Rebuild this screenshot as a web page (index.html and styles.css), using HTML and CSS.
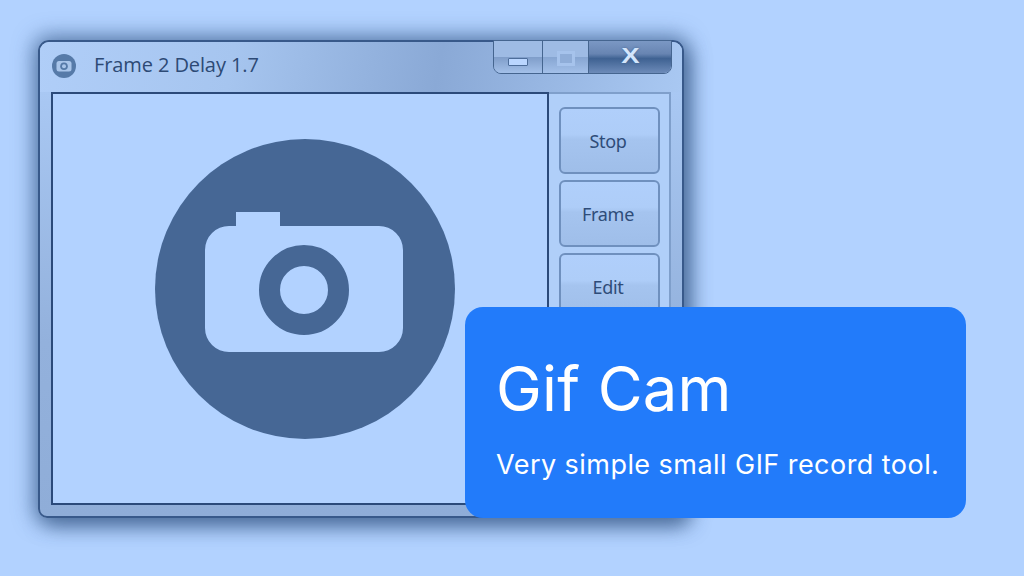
FILE: index.html
```html
<!DOCTYPE html>
<html lang="en">
<head>
<meta charset="utf-8">
<title>Gif Cam</title>
<link rel="stylesheet" href="styles.css">
</head>
<body>
<main class="stage">
  <section class="window">
    <header class="titlebar">
      <svg class="app-icon" viewBox="0 0 24 24" aria-hidden="true">
        <circle cx="12" cy="12" r="12" fill="#567aa8"/>
        <rect x="4.500" y="7" width="15" height="10.500" rx="2.500" fill="#a9c5ea"/>
        <circle cx="12" cy="12.200" r="3.800" fill="#567aa8"/>
        <circle cx="12" cy="12.200" r="2" fill="#a9c5ea"/>
      </svg>
      <span class="title">Frame 2 Delay 1.7</span>
      <div class="controls">
        <div class="ctl ctl-min"><span class="min-glyph"></span></div>
        <div class="ctl ctl-max"><span class="max-glyph"></span></div>
        <div class="ctl ctl-close"><span class="close-glyph">X</span></div>
      </div>
    </header>
    <div class="client">
      <div class="pane">
        <svg class="logo" viewBox="0 0 300 300" aria-hidden="true">
          <circle cx="150" cy="150" r="150" fill="#466795"/>
          <path fill="#b2d2ff" d="M81 87V73h44v14h99a24 24 0 0 1 24 24v78a24 24 0 0 1-24 24H74a24 24 0 0 1-24-24v-78a24 24 0 0 1 24-24z"/>
          <circle cx="149" cy="151" r="34.500" fill="none" stroke="#466795" stroke-width="21"/>
        </svg>
      </div>
      <aside class="side">
        <div class="btn">Stop</div>
        <div class="btn">Frame</div>
        <div class="btn">Edit</div>
      </aside>
    </div>
  </section>
  <section class="card">
    <h1>Gif Cam</h1>
    <p>Very simple small GIF record tool.</p>
  </section>
</main>
</body>
</html>
```
FILE: styles.css
```css
* { box-sizing: border-box; }
html, body { margin: 0; padding: 0; }
body { width: 1024px; height: 576px; overflow: hidden; background: #b2d2ff; }
.stage { position: relative; width: 1024px; height: 576px; overflow: hidden; }

.window {
  position: absolute; left: 38px; top: 40px; width: 646px; height: 478px;
  display: flex; flex-direction: column;
  border: 2px solid #38598a; border-radius: 11px 11px 9px 9px;
  background: linear-gradient(#a9c8f3 0, #a9c8f3 50px, #93b1dc 300px, #8fadd8 100%);
  box-shadow: 0 0 20px 5px rgba(52, 86, 134, .6), 6px 8px 20px rgba(40, 72, 120, .55);
}
.titlebar {
  height: 50px; flex: none; display: flex; align-items: center; padding: 0 0 0 12px; position: relative;
  border-radius: 9px 9px 0 0;
  background: linear-gradient(100deg, #b0cef8 0%, #a6c5ef 30%, #8aa9d6 62%, #97b6e2 78%, #a9c8f2 100%);
}
.app-icon { width: 24px; height: 24px; flex: none; margin-top: -2px; }
.title { margin-left: 18px; margin-top: -4px; font: 20px/24px "Open Sans", "Noto Sans", sans-serif; letter-spacing: -.1px; color: #2d4a75; }
.controls {
  position: absolute; top: -2px; right: 10px; height: 34px; width: 179px;
  display: flex; border: 1px solid #45658f; border-radius: 0 0 8px 8px; overflow: hidden;
}
.ctl { display: flex; align-items: center; justify-content: center; height: 100%; }
.ctl-min { width: 49px; border-right: 1px solid #45658f; background: linear-gradient(#9ebbe4 0 50%, #7f9dc9 50%, #a3c0e9 100%); }
.ctl-max { width: 46px; border-right: 1px solid #45658f; background: linear-gradient(#9ebbe4 0 50%, #86a5d1 50%, #a3c0e9 100%); }
.ctl-close { flex: 1; background: linear-gradient(#7b98c4 0, #6885b2 40%, #3f6292 55%, #6d8bb9 100%); }
.min-glyph { width: 20px; height: 8px; margin-top: 9px; background: #bad6ff; border: 1px solid #4d6d9a; border-radius: 1px; }
.max-glyph { width: 18px; height: 15px; margin-top: 2px; background: #8fadd8; border: 3px solid #a6c3ec; }
.close-glyph { font: 700 22px/22px "Liberation Sans", sans-serif; color: #d3e5fc; margin-top: -3px; transform: scaleX(1.25); text-shadow: 0 0 2px #3f6292; }

.client { flex: 1; display: flex; margin: 0 11px 11px; border-right: 2px solid #7f9fcb; background: #b0cff9; }
.pane {
  width: 498px; display: flex; align-items: flex-start; justify-content: center;
  border: 2px solid #2b4a7a; background: #b2d2ff; padding: 45px 0 0 10px;
}
.logo { width: 300px; height: 300px; flex: none; display: block; }
.side { flex: 1; display: flex; flex-direction: column; gap: 6px; padding: 13px 9px 0 10px; border-top: 2px solid #7f9fcb; }
.btn {
  height: 67px; flex: none; display: flex; align-items: center; justify-content: center;
  border: 2px solid #6f90be; border-radius: 6px;
  background: linear-gradient(#b0cffb 0, #aecdf8 40%, #a5c4ef 48%, #9fbee9 100%);
  font: 18px/20px "Noto Sans", "DejaVu Sans", sans-serif; letter-spacing: -.3px; color: #2e4c79;
  padding: 0 3px 0 0;
}

.card {
  position: absolute; left: 465px; top: 307px; width: 501px; height: 211px;
  border-radius: 18px; background: #227bfa; color: #fff; padding: 47px 20px 0 31px;
}
.card h1 { margin: 0; font: 400 61.500px/70px Inter, "Noto Sans", sans-serif; letter-spacing: .2px; }
.card p { margin: 25px 0 0; font: 400 27px/32px Inter, "Noto Sans", sans-serif; letter-spacing: .45px; white-space: nowrap; }
```
